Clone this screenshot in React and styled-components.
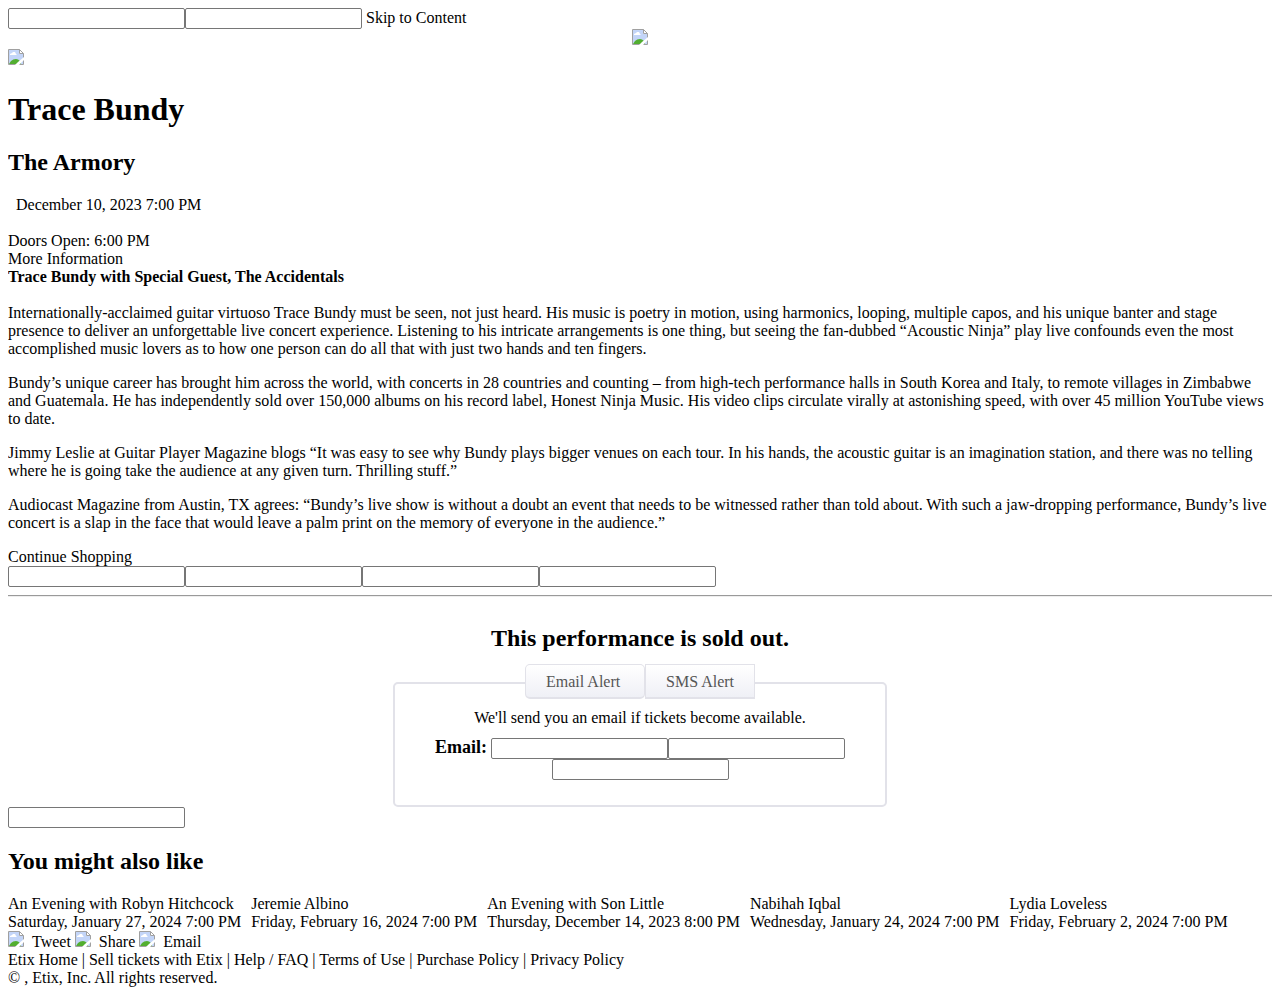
import React from "react";
import styled, { createGlobalStyle } from "styled-components";

const GlobalStyle = createGlobalStyle`
  body {
    margin: 8px;
    background: #fff;
    color: #000;
    font: 16px/18px "Liberation Serif", "Times New Roman", serif;
  }
`;

const Line = styled.div`
  display: flex;
  flex-wrap: wrap;
  align-items: flex-start;
  justify-content: ${(p) => (p.$center ? "center" : "flex-start")};
`;

const Field = styled.input`
  box-sizing: border-box;
  width: 177px;
  height: 21px;
  padding: 1px 2px;
  border: 1px solid #767676;
  border-radius: 2px;
  background: #fff;
  font: 13px "Liberation Sans", Arial, sans-serif;
`;

const TextLink = styled.a`
  color: inherit;
  text-decoration: none;
`;

const SkipLink = styled(TextLink)`
  margin-left: 4px;
  line-height: 20px;
`;

const Picture = styled.div`
  display: flex;
  justify-content: ${(p) => (p.$center ? "center" : "flex-start")};
  height: 20px;
`;

const IconSvg = styled.svg`
  display: block;
  flex: none;
  width: 16px;
  height: 16px;
`;

const Title = styled.h1`
  margin: 22px 0 21px;
  font-size: 32px;
  line-height: 37px;
`;

const Heading = styled.h2`
  margin: 20px 0;
  font-size: 24px;
  line-height: 27px;
  text-align: ${(p) => (p.$center ? "center" : "left")};
`;

const EventDate = styled.div`
  margin-bottom: 18px;
  padding-left: 8px;
`;

const Subtitle = styled.div`
  margin-bottom: 18px;
  font-weight: bold;
`;

const Paragraph = styled.p`
  margin: 0 0 16px;
`;

const Divider = styled.hr`
  margin: 8px 0 28px;
  border: solid;
  border-width: 1px 0;
  border-color: #9a9a9a transparent #eee;
`;

const SoldOut = styled.section`
  h2 {
    margin: 0 0 30px;
  }
`;

const AlertPanel = styled.form`
  box-sizing: border-box;
  max-width: 494px;
  margin: 0 auto;
  padding: 0 32px 25px;
  border: 2px solid #e2e2e9;
  border-radius: 5px;
`;

const Tabs = styled.div`
  display: flex;
  justify-content: center;
  margin-top: -20px;
`;

const Tab = styled.button`
  box-sizing: border-box;
  width: ${(p) => (p.$active ? 120 : 110)}px;
  height: 35px;
  padding: 2px 20px 0;
  border: 1px solid #e2e2e9;
  border-bottom-width: 2px;
  border-radius: ${(p) => (p.$active ? 5 : 0)}px;
  background: linear-gradient(#fff, #eff0f6);
  color: #555;
  font: inherit;
  text-align: left;
  white-space: nowrap;
`;

const AlertText = styled.p`
  margin: 10px 0 11px;
  text-align: center;
`;

const EmailLabel = styled.label`
  margin-right: 4px;
  font-size: 18px;
  font-weight: bold;
`;

const Suggestions = styled.div`
  display: flex;
  flex-wrap: wrap;
  column-gap: 10px;
`;

const Suggestion = styled(TextLink)`
  display: flex;
  flex-direction: column;
`;

const Social = styled.div`
  display: flex;
  column-gap: 4px;
  height: 20px;
`;

const SocialLink = styled(TextLink)`
  display: flex;
  column-gap: 8px;

  span {
    padding-top: 2px;
  }
`;

const paragraphs = [
  "Internationally-acclaimed guitar virtuoso Trace Bundy must be seen, not just heard. His music is poetry in motion, using harmonics, looping, multiple capos, and his unique banter and stage presence to deliver an unforgettable live concert experience. Listening to his intricate arrangements is one thing, but seeing the fan-dubbed “Acoustic Ninja” play live confounds even the most accomplished music lovers as to how one person can do all that with just two hands and ten fingers.",
  "Bundy’s unique career has brought him across the world, with concerts in 28 countries and counting – from high-tech performance halls in South Korea and Italy, to remote villages in Zimbabwe and Guatemala. He has independently sold over 150,000 albums on his record label, Honest Ninja Music. His video clips circulate virally at astonishing speed, with over 45 million YouTube views to date.",
  "Jimmy Leslie at Guitar Player Magazine blogs “It was easy to see why Bundy plays bigger venues on each tour. In his hands, the acoustic guitar is an imagination station, and there was no telling where he is going take the audience at any given turn. Thrilling stuff.”",
  "Audiocast Magazine from Austin, TX agrees: “Bundy’s live show is without a doubt an event that needs to be witnessed rather than told about. With such a jaw-dropping performance, Bundy’s live concert is a slap in the face that would leave a palm print on the memory of everyone in the audience.”",
];

const suggestions = [
  ["An Evening with Robyn Hitchcock", "Saturday, January 27, 2024 7:00 PM"],
  ["Jeremie Albino", "Friday, February 16, 2024 7:00 PM"],
  ["An Evening with Son Little", "Thursday, December 14, 2023 8:00 PM"],
  ["Nabihah Iqbal", "Wednesday, January 24, 2024 7:00 PM"],
  ["Lydia Loveless", "Friday, February 2, 2024 7:00 PM"],
];

const footerLinks = [
  "Etix Home",
  "Sell tickets with Etix",
  "Help / FAQ",
  "Terms of Use",
  "Purchase Policy",
  "Privacy Policy",
];

function PictureIcon() {
  return (
    <IconSvg viewBox="0 0 16 16" aria-hidden="true">
      <path d="M1 1H11V5H15V15H1Z" fill="#c3d5f8" />
      <path d="M2 6V5L4 4L5 3H7L8 5L9 6Z" fill="#fff" />
      <path d="M1 15L3 12Q5 10 8 10Q10 10 12 12L13 15Z" fill="#52ae30" />
      <path d="M11 1L15 5H11Z" fill="#fff" />
      <path
        d="M.5 .5H11.500L15.500 4.500V15.500H.5ZM11.500 .5V4.500H15.500"
        fill="none"
        stroke="#a0a0a0"
      />
      <path d="M16 8V11L11 16H7L10 13Z" fill="#fff" />
    </IconSvg>
  );
}

export default function App() {
  return (
    <>
      <GlobalStyle />
      <header>
        <Line>
          <Field aria-label="Search" />
          <Field aria-label="Keyword" />
          <SkipLink href="#content">Skip to Content</SkipLink>
        </Line>
        <Picture $center>
          <PictureIcon />
        </Picture>
      </header>
      <main id="content">
        <Picture>
          <PictureIcon />
        </Picture>
        <Title>Trace Bundy</Title>
        <Heading>The Armory</Heading>
        <EventDate>December 10, 2023 7:00 PM</EventDate>
        <div>Doors Open: 6:00 PM</div>
        <div>More Information</div>
        <Subtitle>Trace Bundy with Special Guest, The Accidentals</Subtitle>
        {paragraphs.map((text) => (
          <Paragraph key={text}>{text}</Paragraph>
        ))}
        <TextLink href="#shop">Continue Shopping</TextLink>
        <Line>
          <Field aria-label="Performance" />
          <Field aria-label="Venue" />
          <Field aria-label="Language" />
          <Field aria-label="Country" />
        </Line>
        <Divider />
        <SoldOut>
          <Heading $center>This performance is sold out.</Heading>
          <AlertPanel>
            <Tabs>
              <Tab type="button" $active>
                Email Alert
              </Tab>
              <Tab type="button">SMS Alert</Tab>
            </Tabs>
            <AlertText>We'll send you an email if tickets become available.</AlertText>
            <Line $center>
              <EmailLabel htmlFor="email">Email:</EmailLabel>
              <Field id="email" />
              <Field aria-label="Confirm email" />
              <Field aria-label="Submit" />
            </Line>
          </AlertPanel>
        </SoldOut>
        <Line>
          <Field aria-label="Performance code" />
        </Line>
        <Heading>You might also like</Heading>
        <Suggestions>
          {suggestions.map(([name, date]) => (
            <Suggestion href="#event" key={name}>
              <span>{name}</span>
              <span>{date}</span>
            </Suggestion>
          ))}
        </Suggestions>
      </main>
      <footer>
        <Social>
          {["Tweet", "Share", "Email"].map((name) => (
            <SocialLink href="#share" key={name}>
              <PictureIcon />
              <span>{name}</span>
            </SocialLink>
          ))}
        </Social>
        <div>
          {footerLinks.map((name, i) => (
            <React.Fragment key={name}>
              {i > 0 && " | "}
              <TextLink href="#footer">{name}</TextLink>
            </React.Fragment>
          ))}
        </div>
        <div>© , Etix, Inc. All rights reserved.</div>
      </footer>
    </>
  );
}
